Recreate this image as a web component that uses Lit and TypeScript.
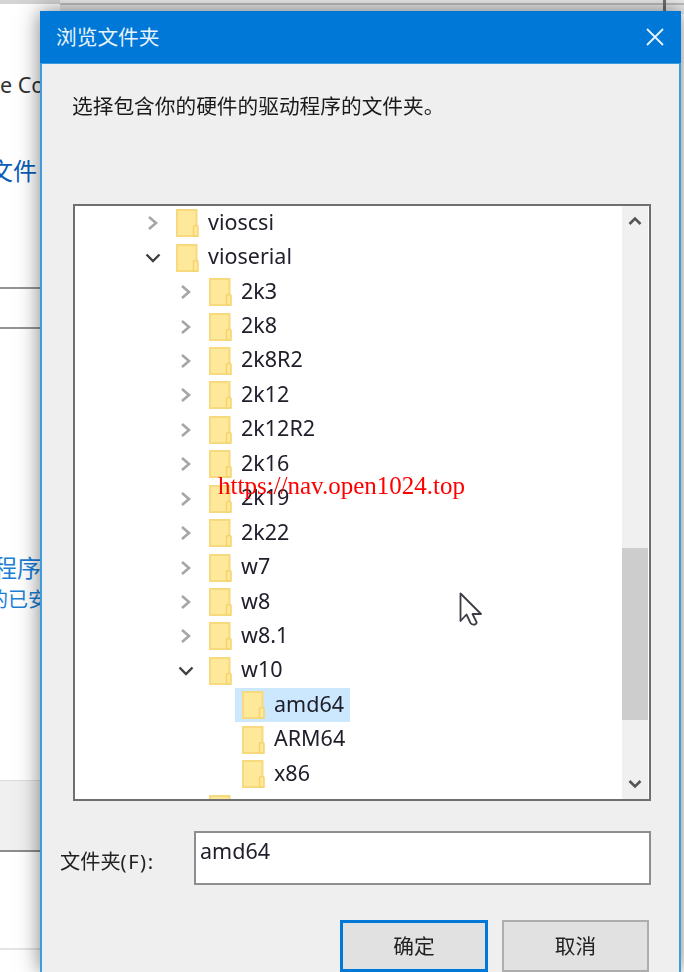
import { LitElement, html, css, svg } from "lit";
import { customElement } from "lit/decorators.js";

type TreeRow = { name: string; level: number; arrow?: "closed" | "open"; selected?: boolean };

const ROWS: TreeRow[] = [
  { name: "vioscsi", level: 0, arrow: "closed" },
  { name: "vioserial", level: 0, arrow: "open" },
  { name: "2k3", level: 1, arrow: "closed" },
  { name: "2k8", level: 1, arrow: "closed" },
  { name: "2k8R2", level: 1, arrow: "closed" },
  { name: "2k12", level: 1, arrow: "closed" },
  { name: "2k12R2", level: 1, arrow: "closed" },
  { name: "2k16", level: 1, arrow: "closed" },
  { name: "2k19", level: 1, arrow: "closed" },
  { name: "2k22", level: 1, arrow: "closed" },
  { name: "w7", level: 1, arrow: "closed" },
  { name: "w8", level: 1, arrow: "closed" },
  { name: "w8.1", level: 1, arrow: "closed" },
  { name: "w10", level: 1, arrow: "open" },
  { name: "amd64", level: 2, selected: true },
  { name: "ARM64", level: 2 },
  { name: "x86", level: 2 },
  { name: "", level: 1 },
];

const folder = svg`<svg class="folder" width="23" height="28" viewBox="0 0 23 28">
  <rect x="1" y="1" width="19.500" height="26" fill="#fee89a" stroke="#f7d97e" stroke-width="2"/>
  <path d="M17.500 27V18q0-1.500 2.250-1.500T22 18v9z" fill="#fee89a" stroke="#f5d36f" stroke-width="1.500"/>
</svg>`;

const chevronClosed = svg`<svg width="12" height="16" viewBox="0 0 12 16"><path d="M2 2l7 6-7 6" fill="none" stroke="#a6a6a6" stroke-width="2.600"/></svg>`;
const chevronOpen = svg`<svg width="16" height="12" viewBox="0 0 16 12"><path d="M1.500 2.500l6.500 6.500 6.500-6.500" fill="none" stroke="#404040" stroke-width="2.400"/></svg>`;

@customElement("app-root")
export class AppRoot extends LitElement {
  static styles = css`
    :host {
      display: block;
      position: relative;
      width: 684px;
      height: 972px;
      overflow: hidden;
      background: #fff;
      font-family: "Noto Sans", "Noto Sans CJK SC", sans-serif;
    }

    .screen {
      position: absolute;
      inset: 0;
      filter: blur(0.45px);
    }

    /* window behind the dialog, only its left edge shows */
    .behind {
      width: 60px;
      height: 972px;
      overflow: hidden;
      border-top: 4px solid #d4d4d4;
      box-sizing: border-box;
      background: #fff;
      white-space: nowrap;
    }
    .behind div {
      box-sizing: border-box;
    }
    .b-eco {
      height: 86px;
      margin-top: 64px;
      font-size: 21.500px;
      line-height: 34px;
      color: #333;
    }
    .b-file {
      height: 133px;
      margin-left: -11px;
      font-size: 24px;
      line-height: 34px;
      color: #0a5cb8;
    }
    .b-lines {
      height: 42px;
      border-top: 2px solid #959595;
      border-bottom: 2px solid #959595;
    }
    .b-prog {
      height: 238px;
      padding-top: 220px;
      margin-left: -7px;
      font-size: 24px;
      line-height: 38px;
      color: #1a7fd6;
    }
    .b-installed {
      height: 213px;
      padding-top: 19px;
      margin-left: -12px;
      font-size: 20px;
      line-height: 28px;
      color: #1a7fd6;
    }
    .b-bar {
      height: 72px;
      background: #f0f0f0;
      border-top: 1px solid #dcdcdc;
      border-bottom: 2px solid #8c8c8c;
    }
    .b-foot {
      height: 98px;
      border-bottom: 2px solid #e4e4e4;
    }

    .behind-top {
      position: absolute;
      left: 60px;
      right: 0;
      top: 0;
      height: 14px;
      background: linear-gradient(#ececec 0 3px, #bfbfbf 3px 5px, #e9e9e9 5px);
      display: flex;
      justify-content: flex-end;
      padding-right: 18px;
    }
    .behind-top i {
      width: 3px;
      background: #6f6f6f;
    }

    .dialog {
      position: absolute;
      left: 40px;
      top: 11px;
      width: 641px;
      height: 961px;
      box-sizing: border-box;
      border-left: 2px solid #3f9be0;
      border-right: 2px solid #3f9be0;
      background: #efefef;
      box-shadow: 0 0 20px rgba(0, 0, 0, 0.5);
      display: flex;
      flex-direction: column;
    }

    .titlebar {
      height: 53px;
      flex: none;
      margin: 0 -2px;
      padding: 0 17px 3px 16px;
      background: #0078d7;
      border-bottom: 1px solid #3f9be0;
      box-sizing: border-box;
      display: flex;
      align-items: center;
      justify-content: space-between;
      color: #e8f3fb;
      font-size: 20.700px;
    }
    .close {
      display: block;
      margin-top: 3px;
    }

    .prompt {
      height: 140px;
      flex: none;
      padding: 25px 0 0 30px;
      box-sizing: border-box;
      font-size: 20.700px;
      line-height: 34px;
      color: #1a1a1a;
    }

    .treebox {
      width: 578px;
      height: 597px;
      flex: none;
      margin-left: 31px;
      box-sizing: border-box;
      border: 2px solid #6f6f6f;
      background: #fff;
      display: flex;
    }
    .tree {
      flex: 1;
      min-width: 0;
      overflow: hidden;
    }
    .row {
      height: 34.450px;
      display: flex;
      align-items: center;
      font-size: 21.500px;
      color: #20202c;
    }
    .row span.name {
      position: relative;
      top: -2px;
    }
    .level-0 { padding-left: 68px; }
    .level-1 { padding-left: 101px; }
    .level-2 { padding-left: 167px; }
    .arrow {
      width: 33px;
      flex: none;
      display: flex;
      justify-content: center;
      box-sizing: border-box;
      padding-right: 13px;
    }
    .folder {
      flex: none;
      margin-right: 9px;
    }
    .pick {
      display: flex;
      align-items: center;
      height: 34px;
      width: 115px;
      margin-left: -7px;
      padding-left: 7px;
      box-sizing: border-box;
      background: #cce8ff;
    }

    .scroll {
      width: 26px;
      flex: none;
      background: #f0f0f0;
      margin-right: 1px;
      display: flex;
      flex-direction: column;
      align-items: center;
    }
    .scroll-btn {
      height: 30px;
      flex: none;
      display: flex;
      align-items: center;
      justify-content: center;
    }
    .scroll-gap {
      height: 312px;
      flex: none;
    }
    .thumb {
      width: 100%;
      height: 172px;
      flex: none;
      background: #cdcdcd;
    }
    .scroll-rest {
      flex: 1;
    }

    .field {
      display: flex;
      align-items: flex-start;
      margin-top: 30px;
      padding-left: 18px;
      flex: none;
    }
    .field label {
      width: 134px;
      flex: none;
      padding-top: 13px;
      font-size: 20.200px;
      line-height: 34px;
      color: #222;
    }
    .field label span {
      letter-spacing: 1.500px;
    }
    .input {
      width: 457px;
      height: 54px;
      box-sizing: border-box;
      border: 2px solid #8e8e8e;
      background: #fff;
      padding: 0 0 0 4px;
      font-size: 21.500px;
      line-height: 35px;
      color: #20202c;
    }

    .buttons {
      display: flex;
      gap: 14px;
      margin-top: 35px;
      padding-left: 298px;
      flex: none;
    }
    .btn {
      width: 147px;
      height: 52px;
      box-sizing: border-box;
      background: #e1e1e1;
      border: 2px solid #adadad;
      padding-bottom: 2px;
      display: flex;
      align-items: center;
      justify-content: center;
      font-size: 20.700px;
      color: #222;
    }
    .btn.primary {
      width: 148px;
      border: 3px solid #0078d7;
    }

    .cursor {
      position: absolute;
      left: 459px;
      top: 592px;
    }

    .watermark {
      position: absolute;
      left: 218px;
      top: 472px;
      font-family: "Liberation Serif", serif;
      font-size: 25px;
      line-height: 28px;
      color: #ff0000;
      white-space: nowrap;
    }
  `;

  renderRow(row: TreeRow) {
    const label = row.name ? html`<span class="name">${row.name}</span>` : "";
    if (row.selected) {
      return html`<div class="row level-${row.level}"><div class="pick">${folder}${label}</div></div>`;
    }
    const arrow = row.arrow
      ? html`<span class="arrow">${row.arrow === "open" ? chevronOpen : chevronClosed}</span>`
      : row.level < 2
        ? html`<span class="arrow"></span>`
        : "";
    return html`<div class="row level-${row.level}">${arrow}${folder}${label}</div>`;
  }

  render() {
    return html`
      <div class="screen">
        <div class="behind">
          <div class="b-eco">e Co</div>
          <div class="b-file">文件</div>
          <div class="b-lines"></div>
          <div class="b-prog">程序</div>
          <div class="b-installed">的已安</div>
          <div class="b-bar"></div>
          <div class="b-foot"></div>
        </div>
        <div class="behind-top"><i></i></div>

        <div class="dialog">
          <div class="titlebar">
            <span>浏览文件夹</span>
            <svg class="close" width="18" height="18" viewBox="0 0 18 18">
              <path d="M1 1l16 16M17 1L1 17" stroke="#e8f3fb" stroke-width="1.800" fill="none"/>
            </svg>
          </div>
          <div class="prompt">选择包含你的硬件的驱动程序的文件夹。</div>
          <div class="treebox">
            <div class="tree">${ROWS.map((row) => this.renderRow(row))}</div>
            <div class="scroll">
              <div class="scroll-btn">
                <svg width="14" height="10" viewBox="0 0 14 10"><path d="M1.500 8l5.500-5.500 5.500 5.500" fill="none" stroke="#555" stroke-width="2.600"/></svg>
              </div>
              <div class="scroll-gap"></div>
              <div class="thumb"></div>
              <div class="scroll-rest"></div>
              <div class="scroll-btn">
                <svg width="14" height="10" viewBox="0 0 14 10"><path d="M1.500 2l5.500 5.500 5.500-5.500" fill="none" stroke="#555" stroke-width="2.600"/></svg>
              </div>
            </div>
          </div>
          <div class="field">
            <label>文件夹<span>(F):</span></label>
            <div class="input">amd64</div>
          </div>
          <div class="buttons">
            <div class="btn primary">确定</div>
            <div class="btn">取消</div>
          </div>
        </div>

        <svg class="cursor" width="26" height="36" viewBox="0 0 26 36">
          <path d="M1.500 1.500V29l6-6.500 4 8.500q1.500 2 4.500 1.500 2-1 1.500-2.500l-4-8h8.500z" fill="#fff" stroke="#3c3c44" stroke-width="1.800" stroke-linejoin="round"/>
        </svg>
      </div>
      <div class="watermark">https://nav.open1024.top</div>
    `;
  }
}
